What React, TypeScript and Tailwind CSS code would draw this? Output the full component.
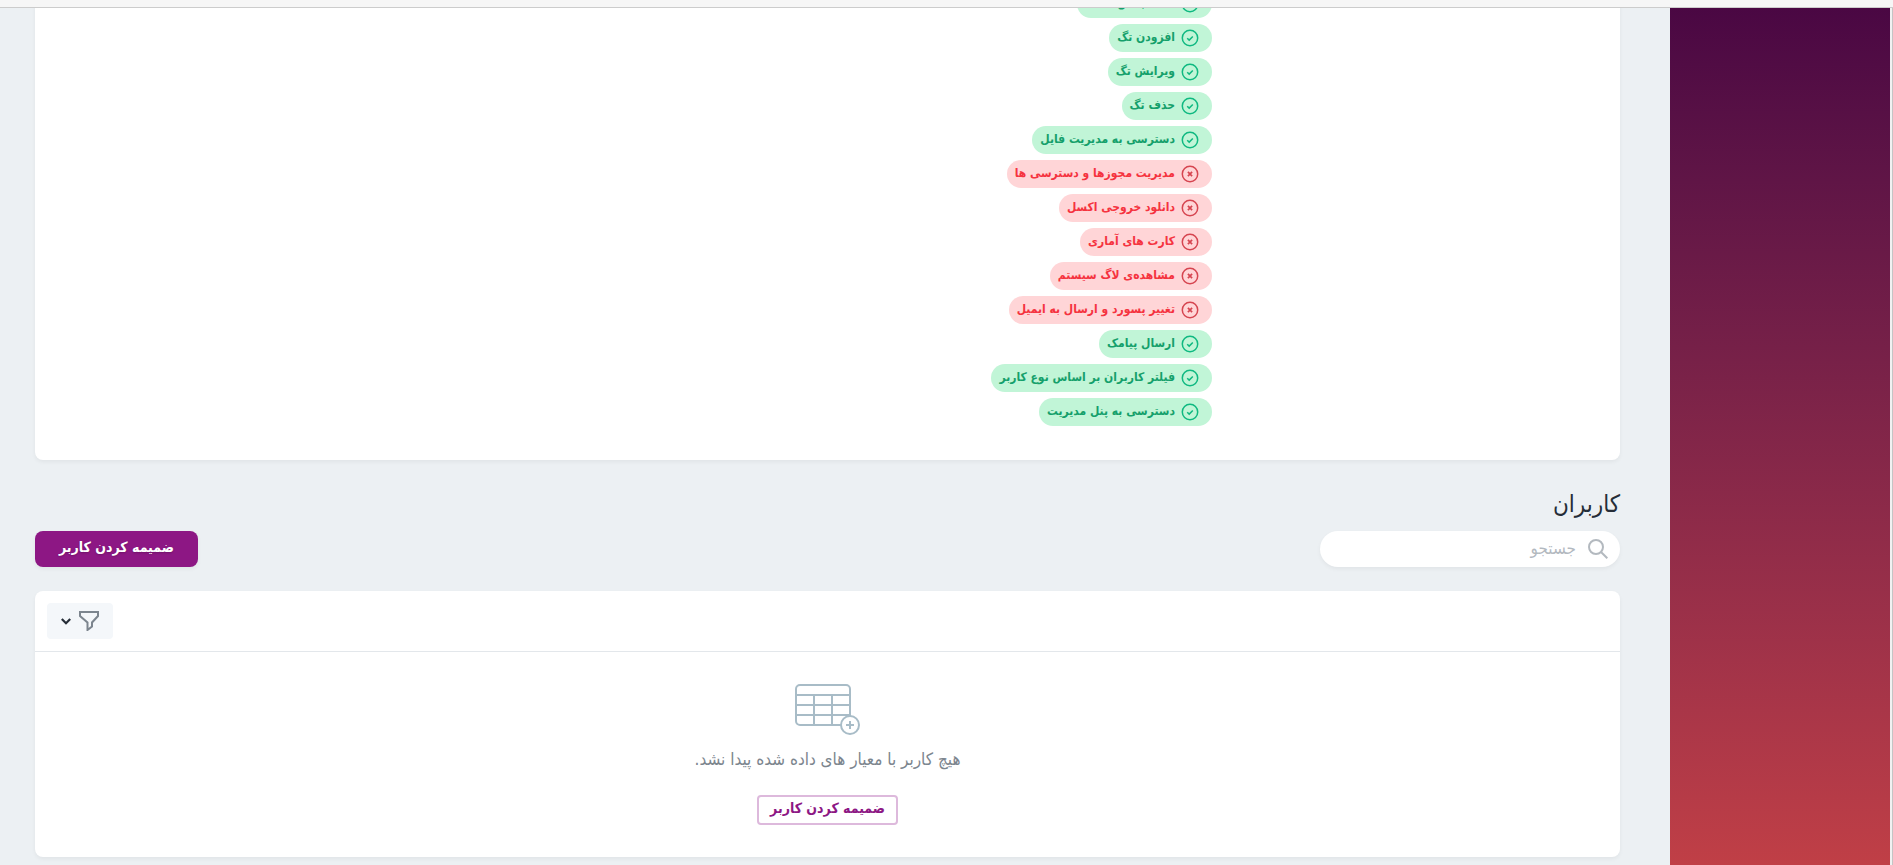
import React from "react";

type Permission = { label: string; granted: boolean };

const permissions: Permission[] = [
  { label: "حذف بخش مقاله", granted: true },
  { label: "افزودن تگ", granted: true },
  { label: "ویرایش تگ", granted: true },
  { label: "حذف تگ", granted: true },
  { label: "دسترسی به مدیریت فایل", granted: true },
  { label: "مدیریت مجوزها و دسترسی ها", granted: false },
  { label: "دانلود خروجی اکسل", granted: false },
  { label: "کارت های آماری", granted: false },
  { label: "مشاهده‌ی لاگ سیستم", granted: false },
  { label: "تغییر پسورد و ارسال به ایمیل", granted: false },
  { label: "ارسال پیامک", granted: true },
  { label: "فیلتر کاربران بر اساس نوع کاربر", granted: true },
  { label: "دسترسی به پنل مدیریت", granted: true },
];

function StatusIcon({ granted }: { granted: boolean }) {
  return (
    <svg
      className={granted ? "size-[18px] text-[#0fb981]" : "size-[18px] text-[#d64550]"}
      viewBox="0 0 18 18"
      fill="none"
      stroke="currentColor"
      strokeWidth="1.5"
      aria-hidden="true"
    >
      <circle cx="9" cy="9" r="7.7" />
      {granted ? <path d="M6.2 9.2l2 1.9 3.6-3.7" /> : <path d="M6.9 6.9l4.2 4.2M11.1 6.9l-4.2 4.2" strokeWidth="1.7" />}
    </svg>
  );
}

function PermissionChip({ label, granted }: Permission) {
  return (
    <li
      className={
        granted
          ? "flex h-7 items-center gap-1.5 rounded-full bg-[#c1f5d7] ps-[13px] pe-2 text-[#15a06b]"
          : "flex h-7 items-center gap-1.5 rounded-full bg-[#ffd5d7] ps-[13px] pe-2 text-[#f5333f]"
      }
    >
      <StatusIcon granted={granted} />
      <span className="pb-0.5 text-xs leading-5 font-bold whitespace-nowrap">{label}</span>
    </li>
  );
}

function SearchIcon() {
  return (
    <svg className="size-5" viewBox="0 0 20 20" fill="none" stroke="#b3b9bf" strokeWidth="2" aria-hidden="true">
      <circle cx="8" cy="8" r="7" />
      <path d="M13 13l6.3 6.3" />
    </svg>
  );
}

function FilterIcon() {
  return (
    <svg className="size-5" viewBox="0 0 20 20" fill="none" stroke="#7c858e" strokeWidth="2" aria-hidden="true">
      <path d="M1 1h18v4l-6 6.5v4L8.5 19v-7.5L1 5z" />
    </svg>
  );
}

function EmptyTableIcon() {
  return (
    <svg className="h-[51px] w-[65px]" viewBox="0 0 65 51" fill="none" stroke="#a8bcc7" strokeWidth="2" aria-hidden="true">
      <path d="M46 41H5a4 4 0 0 1-4-4V5a4 4 0 0 1 4-4h46a4 4 0 0 1 4 4v27" />
      <path d="M1 11h54M1 21h54M1 31h54M19 11v30M37 11v30" />
      <circle cx="55" cy="41" r="9" fill="#fff" />
      <path d="M51 41h8M55 37v8" />
    </svg>
  );
}

export default function App() {
  return (
    <div
      dir="rtl"
      lang="fa"
      className="flex h-screen flex-col overflow-hidden bg-[#ecf0f3] font-['DejaVu_Sans_Condensed','DejaVu_Sans',sans-serif] text-[#252d37]"
    >
      <div className="h-2 shrink-0 border-b border-[#cccccc] bg-[#f6f6f6]" />
      <div className="flex min-h-0 flex-1 border-s border-[#c4c4c4]">
        <div className="w-0.5 shrink-0 bg-[#f1f1f1]" />
        <aside className="w-[220px] shrink-0 bg-linear-to-b from-[#4a0743] to-[#c03f46]" />
        <main className="min-w-0 flex-1 overflow-hidden ps-[50px] pe-[35px]">
          <section className="-mt-[18px] rounded-b-lg bg-white pb-[34px] shadow-[0_2px_4px_rgba(0,0,0,0.05)]">
            <ul className="ms-[408px] flex flex-col items-start gap-1.5">
              {permissions.map((p) => (
                <PermissionChip key={p.label} {...p} />
              ))}
            </ul>
          </section>

          <h1 className="mt-7 text-2xl leading-8">کاربران</h1>
          <div className="mt-[11px] flex h-9 items-center justify-between">
            <label className="flex h-9 w-[300px] items-center gap-3 rounded-full bg-white ps-3 pe-4 shadow-[0_2px_4px_rgba(0,0,0,0.05)]">
              <SearchIcon />
              <input
                type="search"
                aria-label="جستجو"
                placeholder="جستجو"
                className="min-w-0 flex-1 bg-transparent text-[17px] outline-none placeholder:text-[#b3b9bf]"
              />
            </label>
            <button
              type="button"
              className="h-9 rounded-lg bg-[#8d1784] px-6 pb-1 text-sm font-bold text-white shadow-[0_2px_4px_rgba(0,0,0,0.05)] text-shadow-[0_1px_2px_rgba(0,0,0,0.2)]"
            >
              ضمیمه کردن کاربر
            </button>
          </div>

          <section className="mt-6 rounded-lg bg-white shadow-[0_2px_4px_rgba(0,0,0,0.05)]">
            <div className="flex justify-end border-b border-[#e3e7eb] p-3">
              <button type="button" aria-label="فیلتر" className="flex h-9 w-[66px] items-center gap-2 rounded bg-[#f4f7fa] ps-[14px]">
                <FilterIcon />
                <svg className="h-[7px] w-[10px]" viewBox="0 0 10 7" fill="none" stroke="#252d37" strokeWidth="2.2" aria-hidden="true">
                  <path d="M0.8 1l4.2 4.2L9.2 1" />
                </svg>
              </button>
            </div>
            <div className="flex flex-col items-center pt-8 pb-8">
              <EmptyTableIcon />
              <p className="mt-3 mb-6 text-[17px] leading-6 text-[#7c858e]">هیچ کاربر با معیار های داده شده پیدا نشد.</p>
              <button
                type="button"
                className="h-[30px] rounded border-2 border-[#ddb9dc] px-[11px] pb-1 text-sm leading-5 font-bold text-[#8d1784]"
              >
                ضمیمه کردن کاربر
              </button>
            </div>
          </section>
        </main>
      </div>
    </div>
  );
}
